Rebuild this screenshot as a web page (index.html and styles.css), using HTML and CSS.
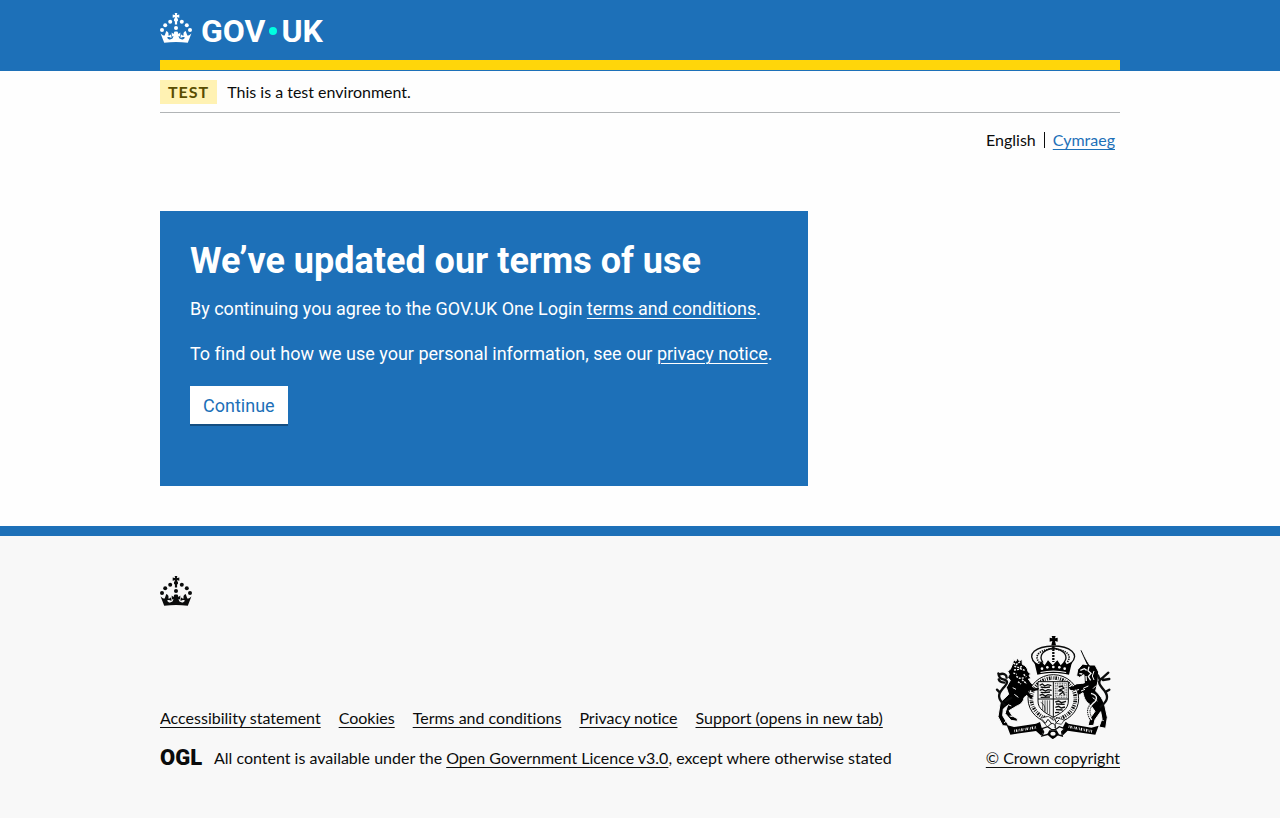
FILE: index.html
```html
<!DOCTYPE html>
<html lang="en">
<head>
<meta charset="utf-8">
<meta name="viewport" content="width=device-width, initial-scale=1">
<title>We’ve updated our terms of use – GOV.UK One Login</title>
<link rel="stylesheet" href="styles.css">
</head>
<body>
<svg class="sprite" aria-hidden="true">
  <symbol id="crown" viewBox="0 0 32 30">
    <path d="M14.700 0h2.600l-.4 2c.8.3 1.600-.3 2.400-.5v3.200c-.8-.2-1.600-.6-2.400-.4.1 1 1.200 1.600 1.200 2.700a2 2 0 0 1-1 1.600V11.500h-2.200V8.600a2 2 0 0 1-1-1.600c0-1.100 1.100-1.700 1.200-2.700-.8-.2-1.600.2-2.400.4V1.500c.8.2 1.600.8 2.400.5z"/>
    <circle cx="16" cy="15" r="2"/>
    <circle cx="10.200" cy="8.800" r="2"/><circle cx="21.800" cy="8.800" r="2"/>
    <circle cx="5.200" cy="12.200" r="2"/><circle cx="26.800" cy="12.200" r="2"/>
    <circle cx="2" cy="17" r="2"/><circle cx="30" cy="17" r="2"/>
    <path d="M4.200 29.700.600 20.400c1.200 1.300 2.700 2.200 4.100 2.100L6.300 18c2 .9 2.700 2.600 2 4.400 1.200.1 2-.3 2.500-1.200l.7 4c-1.500-1.300-3-1.500-4.300-.8.8 1.900 2.600 2.500 4.200 1.700 1.300-.6 1.900-1.900 2-3.200-.6 0-1.200.4-1.700 1v-4.300c.6.9 1.400 1.300 2.300 1.100-.3-1 .1-1.800.9-2.200h2.200c.8.400 1.200 1.200.9 2.200.9.200 1.700-.2 2.300-1.100v4.300c-.5-.6-1.100-1-1.700-1 .1 1.300.7 2.600 2 3.200 1.600.8 3.400.2 4.200-1.700-1.300-.7-2.800-.5-4.300.8l.7-4c.5.9 1.300 1.300 2.500 1.200-.7-1.800 0-3.500 2-4.400l1.600 4.500c1.400.1 2.900-.8 4.100-2.100l-3.600 9.300c-7.800-1-15.800-1-23.600 0z"/>
  </symbol>
</svg>

<header class="header">
  <div class="container header-inner">
    <a class="brand" href="#" aria-label="GOV.UK">
      <svg class="crown" aria-hidden="true"><use href="#crown"/></svg>
      <span class="wordmark">GOV<span class="brand-dot"></span>UK</span>
    </a>
  </div>
</header>

<div class="container">
  <div class="phase">
    <strong class="tag">TEST</strong>
    <span>This is a test environment.</span>
  </div>
  <nav class="languages" aria-label="Language">
    <span>English</span>
    <a class="language-link" href="#" lang="cy">Cymraeg</a>
  </nav>
  <main class="main">
    <section class="panel">
      <h1 class="title">We’ve updated our terms of use</h1>
      <p class="text">By continuing you agree to the GOV.UK One Login <a href="#">terms and conditions</a>.</p>
      <p class="text">To find out how we use your personal information, see our <a href="#">privacy notice</a>.</p>
      <button class="button" type="submit">Continue</button>
    </section>
  </main>
</div>

<footer class="footer">
  <div class="container">
    <svg class="crown" aria-hidden="true"><use href="#crown"/></svg>
    <div class="meta">
      <div class="meta-main">
        <ul class="footer-links">
          <li><a href="#">Accessibility statement</a></li>
          <li><a href="#">Cookies</a></li>
          <li><a href="#">Terms and conditions</a></li>
          <li><a href="#">Privacy notice</a></li>
          <li><a href="#">Support (opens in new tab)</a></li>
        </ul>
        <div class="licence">
          <span class="ogl" aria-hidden="true">OGL</span>
          <span>All content is available under the <a href="#">Open Government Licence v3.0</a>, except where otherwise stated</span>
        </div>
      </div>
      <a class="copyright" href="#">
        <svg class="arms" viewBox="33 18 348 309" aria-hidden="true">
          <!-- royal crown -->
          <path d="M203 18h12l-2 7 8-2v12l-8-2 3 13h-14l3-13-8 2V23l8 2z"/>
          <g fill="none" stroke="#0b0c0c">
            <path stroke-width="4" d="M155 101C124 72 157 49 207 48c50 0 84 24 53 53M177 98c-15-22 0-38 31-44 32 6 47 22 32 44"/>
            <path stroke-width="5" stroke-dasharray="4 3" d="M166 98c-19-24 4-39 41-42 38 3 60 18 42 42"/>
            <path stroke-width="7" stroke-dasharray="6 3" d="M208 48v48"/>
          </g>
          <path d="M151 96l14 7 6-10 11 13 10-15 14 15 14-15 10 15 12-13 6 10 16-8-9 39c-29-7-66-7-95 0z"/>
          <g fill="#f8f8f8"><circle cx="174" cy="116" r="4"/><circle cx="190" cy="112" r="4"/><circle cx="208" cy="111" r="4"/><circle cx="226" cy="112" r="4"/><circle cx="242" cy="116" r="4"/><path d="M169 126c26-6 52-6 78 0l-1 3c-25-5-51-5-76 0z"/></g>
          <!-- lion -->
          <path stroke="#f8f8f8" stroke-width="3" d="M86 101l3-12 7 5 4-10 6 9 8-5 1 15c10 4 16 11 17 22l8 7-5 4 6 10-8 1 10 14 21 7 2 9-18 1 8 9-20-5-4 11-12 10c-2 14-11 20-20 24l-25 15 10 16 15 8v8l-19-3-18-21 8-24-13 11-2 20 14 23 5 9-19-2-14-27 7-43 25-24-7-21 12-21-8-9 5-9-5-10 8-5z"/>
          <g fill="none" stroke="#0b0c0c" stroke-width="7" stroke-linecap="round"><path d="M61 224c-20-18-20-31-5-48 17-17 17-25 2-28-10-2-14-10-15-18M47 133c11-5 21 1 21 10M61 158c-12-1-16-6-17-10M47 187l-8-8M64 213l18-9"/></g>
          <g fill="none" stroke="#f8f8f8" stroke-width="4" stroke-dasharray="6 3"><path d="M88 99l8 5 13-9M91 109l14 4 9-4M90 120l14-2 8-4M108 116l14 5M88 129l10 4M97 139l10 6 15-2M102 155l9 7M114 149l14 12M119 133l8 8"/></g>
          <g fill="none" stroke="#f8f8f8" stroke-width="3"><path d="M86 173l10 5M91 193l12 9M72 224l10 4M58 254l8-8M125 187l14 7M77 258l9 2M60 278l8-5"/></g>
          <!-- unicorn -->
          <path stroke="#f8f8f8" stroke-width="3" d="M317 105L289 58l20 46-13-2-15 17-3 18 9 5 13-8 1 25-31 8-13 8 5 9 22-6-11 13 4 9 20-12c3 18 9 28 22 36l14 20-16 23-5 20 17-1 4-17 17-24 4 21-9 25 20 4 5-33-8-37c-5-17-15-31-27-42l7-29 2-28-11-21z"/>
          <path stroke="#0b0c0c" stroke-width="3" d="M291 61l19 42"/>
          <g fill="none" stroke="#0b0c0c" stroke-width="7" stroke-linecap="round"><path d="M350 230c20-17 25-29 12-47-17-19-23-29-8-38l19-17M347 149l-5-13M357 150l19-3M368 184l8-5"/></g>
          <g fill="none" stroke="#f8f8f8" stroke-width="4"><path d="M289 121l12-5 7 5M286 131l9 1M306 138l1 15M315 110l-3 12 9 8-8 10 7 11"/></g>
          <g fill="none" stroke="#f8f8f8" stroke-width="3"><path d="M313 168l-16 7M326 203l14 10M336 167l-9 9M350 268l9 4M291 183l12-5M330 123l-5 15 5 12"/></g>
          <g fill="none" stroke="#0b0c0c"><path stroke-width="10" stroke-dasharray="4 2" d="M321 190c25 6 17 23 5 31-15 12-15 29-3 49"/><path stroke="#f8f8f8" stroke-width="4" d="M321 190c25 6 17 23 5 31-15 12-15 29-3 49"/></g>
          <!-- garter and shield -->
          <ellipse cx="208" cy="206" rx="76" ry="72" fill="#f8f8f8" stroke="#0b0c0c" stroke-width="3"/>
          <ellipse cx="208" cy="206" rx="66" ry="62" fill="none" stroke="#0b0c0c" stroke-width="11" stroke-dasharray="3 3 5 3 2 4"/>
          <path fill="#f8f8f8" stroke="#0b0c0c" stroke-width="3" d="M162 155h91v58c0 25-21 35-45 49-25-14-46-24-46-49z"/>
          <path fill="none" stroke="#0b0c0c" stroke-width="3" d="M208 155v107M162 207h91"/>
          <g fill="none" stroke="#0b0c0c" stroke-width="4"><path d="M167 166l8-4 7 6 9-4 11 3M170 171l13 2 15-2M167 181l8-3 9 5 8-4 11 2M170 187l12 1 16-2M167 196l8-3 9 5 8-4 11 2M170 202l28-1"/></g>
          <g fill="none" stroke="#0b0c0c" stroke-width="2"><path d="M214 160h34v42h-34zM219 165h24v32h-24z" stroke-dasharray="3 2"/><path stroke-width="4" d="M224 171l11-3 4 7-11 4 10 7-12 8M223 182l7 2M238 190l4 4"/><path d="M176 211v31M183 211v36M190 211v39M197 211v43M170 217c11 5 14 15 12 27"/></g>
          <g fill="none" stroke="#0b0c0c" stroke-width="4"><path d="M214 216l10-3 8 5 14-4M216 222l26 1M214 232l10-3 8 5 11-3M216 239l20 1M213 248l13-1"/></g>
          <!-- forelegs over the garter -->
          <path d="M115 163l22 2 14 10 14-1-3 7-17 2-22-8zM118 178l17 10 10 12-3 8-14-13-17-5zM300 161l-22 2-14 8-10 0 4 8 12 1 28-7z"/>
          <!-- belt, motto scroll and compartment -->
          <path fill="#f8f8f8" stroke="#0b0c0c" stroke-width="2" d="M168 265l25-6 15 12 12-7 21 6-9 13-18-4 1 17-13 8-12-14z"/>
          <g fill="none" stroke="#0b0c0c" stroke-width="3"><path d="M174 268l10 12 8-12 11 13M213 269l4 9 8-8M193 289c10-16 23-7 20 5"/></g>
          <path d="M68 285l22 6 66-10 12-5 5 17 8 6-9 18-16-14-77 11zM344 287l-22 6-69-12-8-6-8 16-9 7 9 18 14-14 83 12z"/>
          <path fill="#f8f8f8" stroke="#0b0c0c" stroke-width="4" d="M174 296l17-6 12 9h11l12-9 16 6-9 9 2 13-18-5-12 11-13-11-18 5 5-12z"/>
          <path d="M196 301h22l7 12-10 9-8 5-7-5-10-9z"/>
          <g fill="#f8f8f8"><ellipse cx="207" cy="311" rx="8" ry="6"/></g>
          <g fill="none" stroke="#f8f8f8" stroke-width="8"><path stroke-dasharray="2 3 4 3 1 3" d="M91 303l65-11M254 290l70 14"/></g>
        </svg>
        <span class="copyright-text">© Crown copyright</span>
      </a>
    </div>
  </div>
</footer>
</body>
</html>
```

FILE: styles.css
```css
* { box-sizing: border-box; }

body {
  margin: 0;
  background: #fefefe;
  color: #0b0c0c;
  font-family: Lato, "Liberation Sans", sans-serif;
  font-size: 16px;
  font-variant-ligatures: none;
  line-height: 20px;
}

a {
  color: inherit;
  text-decoration-thickness: 1px;
  text-underline-offset: 3px;
}

.sprite { position: absolute; width: 0; height: 0; }

.container {
  max-width: 960px;
  margin: 0 auto;
}

.header {
  background: #1d70b8;
  color: #fff;
  padding-bottom: 1px;
}

.header-inner {
  display: flex;
  border-bottom: 10px solid #ffd60a;
  padding: 13px 0 11px;
}

.brand {
  display: flex;
  align-items: flex-start;
  gap: 9px;
  text-decoration: none;
}

.crown {
  display: block;
  width: 32px;
  height: 30px;
  fill: currentColor;
}

.wordmark {
  display: flex;
  align-items: center;
  font-family: Roboto, "Liberation Sans", sans-serif;
  font-size: 32px;
  font-weight: 700;
  line-height: 36px;
}

.brand-dot {
  width: 8px;
  height: 8px;
  margin: 0 4px;
  border-radius: 50%;
  background: #00ffe0;
}

.phase {
  display: flex;
  align-items: center;
  gap: 10px;
  padding: 9px 0 8px;
  border-bottom: 1px solid #b1b4b6;
}

.tag {
  padding: 2px 8px;
  background: #fff2b3;
  color: #594d00;
  letter-spacing: 1px;
}

.languages {
  display: flex;
  justify-content: flex-end;
  padding: 17px 5px 0 0;
}

.language-link {
  position: relative;
  margin-left: 8px;
  padding-left: 9px;
  color: #1d70b8;
}

.language-link::before {
  content: "";
  position: absolute;
  left: 0;
  top: 2px;
  height: 16px;
  border-left: 1px solid #0b0c0c;
}

.main { padding: 61px 0 40px; }

.panel {
  width: 648px;
  max-width: 100%;
  padding: 30px 30px 62px;
  background: #1d70b8;
  color: #fff;
  font-family: Roboto, "Liberation Sans", sans-serif;
}

.title {
  margin: 0 0 15px;
  font-size: 36px;
  font-weight: 700;
  line-height: 40px;
}

.text {
  margin: 0 0 20px;
  font-size: 18px;
  line-height: 25px;
}

.button {
  display: block;
  padding: 8px 13px 7px;
  border: 0;
  background: #fff;
  box-shadow: 0 2px 0 #144e81;
  color: #1d70b8;
  font: inherit;
  font-size: 18px;
  line-height: 23px;
}

.footer {
  border-top: 10px solid #1d70b8;
  background: #f8f8f8;
  padding: 40px 0 50px;
}

.meta {
  display: flex;
  justify-content: space-between;
  align-items: flex-end;
  margin-top: 30px;
}

.footer-links {
  display: flex;
  flex-wrap: wrap;
  gap: 18px;
  margin: 0 0 20px;
  padding: 0;
  list-style: none;
}

.licence {
  display: flex;
  align-items: center;
  gap: 13px;
}

.ogl {
  width: 41px;
  font-family: Roboto, "Liberation Sans", sans-serif;
  font-size: 22px;
  font-weight: 900;
}

.copyright {
  display: flex;
  flex-direction: column;
  align-items: center;
  gap: 9px;
  text-decoration: none;
}

.copyright-text {
  text-decoration: underline;
  text-decoration-thickness: 1px;
  text-underline-offset: 3px;
}

.arms {
  display: block;
  width: 116px;
  height: 103px;
}
```
